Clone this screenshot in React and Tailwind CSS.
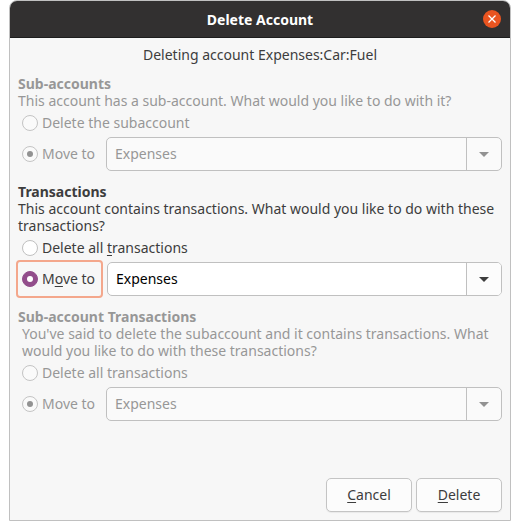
import { useState } from "react";

const radioBase =
  "grid size-4 shrink-0 appearance-none place-content-center rounded-full border border-[#c0c0c0] bg-white outline-none before:rounded-full checked:border-[#924d8b] checked:bg-[#924d8b] checked:before:size-[6px] checked:before:bg-white disabled:border-[#c4c4c4] disabled:bg-[#fafafa] disabled:checked:before:bg-[#929292]";

function Mnemonic({ text, at }) {
  if (at === undefined) return <span>{text}</span>;
  return (
    <span className="whitespace-pre">
      {text.slice(0, at)}
      <u className="underline decoration-1 underline-offset-2">{text[at]}</u>
      {text.slice(at + 1)}
    </span>
  );
}

function AccountSelect({ disabled, label }) {
  return (
    <div
      className={`relative flex h-[34px] min-w-0 grow rounded-[5px] border border-[#c0c0c0] ${
        disabled ? "bg-[#fafafa] text-[#979797]" : "bg-white text-black"
      }`}
    >
      <select
        aria-label={label}
        disabled={disabled}
        className="w-full appearance-none bg-transparent px-2 pb-0.5 opacity-100 outline-none"
      >
        <option>Expenses</option>
      </select>
      <span
        className={`pointer-events-none absolute inset-y-0 right-0 flex w-[35px] items-center justify-center rounded-r-[4px] border-l border-[#c0c0c0] ${
          disabled ? "text-[#929292]" : "bg-[#fcfcfc] text-[#3d3d3d]"
        }`}
      >
        <svg width="10" height="5" viewBox="0 0 10 5" fill="currentColor" aria-hidden="true">
          <path d="M0 0h10L5 5z" />
        </svg>
      </span>
    </div>
  );
}

function Section({ title, text, inset, name, removeLabel, removeAt, moveAt, disabled, focused }) {
  const [choice, setChoice] = useState("move");
  return (
    <fieldset disabled={disabled} className={`min-w-0 ${disabled ? "text-[#979797]" : "text-[#3d3d3d]"}`}>
      <legend className="font-bold">{title}</legend>
      <p className={inset ? "pl-1" : ""}>{text}</p>
      <label className="mt-[5px] flex items-center gap-1 pl-1">
        <input
          type="radio"
          name={name}
          className={radioBase}
          checked={choice === "delete"}
          onChange={() => setChoice("delete")}
        />
        <Mnemonic text={removeLabel} at={removeAt} />
      </label>
      <div className={`mt-1.5 flex items-center ${focused ? "gap-1.5" : "gap-1"}`}>
        <label
          className={`flex h-[34px] shrink-0 items-center gap-1 rounded-[2px] pl-1 ${
            focused ? "w-[83px] outline-2 outline-[#f4a78c]" : "w-[84px]"
          }`}
        >
          <input
            type="radio"
            name={name}
            className={radioBase}
            checked={choice === "move"}
            onChange={() => setChoice("move")}
          />
          <span className="pb-0.5">
            <Mnemonic text="Move to" at={moveAt} />
          </span>
        </label>
        <AccountSelect disabled={disabled} label={`${title}: move to account`} />
      </div>
    </fieldset>
  );
}

const dialogButton =
  "flex h-[34px] w-[86px] items-center justify-center rounded-[5px] border border-[#c4c4c4] bg-[#fcfcfc] pb-0.5 shadow-[0_1px_1px_rgba(0,0,0,0.06)]";

export default function App() {
  return (
    <main className="bg-white px-[9px] pb-[9px] font-['Noto_Sans',sans-serif] text-[14px] leading-[17px] text-[#3d3d3d]">
      <div role="dialog" aria-labelledby="dialog-title" className="rounded-t-[8px] border border-[#c0c0c0] bg-[#f7f7f7]">
        <header className="grid h-[37px] grid-cols-[1fr_auto_1fr] items-center rounded-t-[7px] border-b border-[#1d1d1d] bg-[#323030] px-[9px]">
          <h1 id="dialog-title" className="col-start-2 font-bold text-white">
            Delete Account
          </h1>
          <button
            type="button"
            aria-label="Close"
            className="flex size-[18px] items-center justify-center justify-self-end rounded-full bg-[#e95420] text-white"
          >
            <svg width="8" height="8" viewBox="0 0 8 8" stroke="currentColor" strokeWidth="1.3" aria-hidden="true">
              <path d="M0.5 0.5l7 7M7.5 0.5l-7 7" />
            </svg>
          </button>
        </header>
        <div className="p-2">
          <p className="text-center">Deleting account Expenses:Car:Fuel</p>
          <div className="mt-3 flex flex-col gap-3">
            <Section
              title="Sub-accounts"
              text="This account has a sub-account. What would you like to do with it?"
              name="subaccounts"
              removeLabel="Delete the subaccount"
              disabled
            />
            <Section
              title="Transactions"
              text="This account contains transactions. What would you like to do with these transactions?"
              name="transactions"
              removeLabel="Delete all transactions"
              removeAt={11}
              moveAt={1}
              focused
            />
            <Section
              title="Sub-account Transactions"
              text="You've said to delete the subaccount and it contains transactions. What would you like to do with these transactions?"
              inset
              name="subaccount-transactions"
              removeLabel="Delete all transactions"
              disabled
            />
          </div>
          <div className="mt-[57px] flex justify-end gap-1">
            <button type="button" className={dialogButton}>
              <Mnemonic text="Cancel" at={0} />
            </button>
            <button type="button" className={dialogButton}>
              <Mnemonic text="Delete" at={0} />
            </button>
          </div>
        </div>
      </div>
    </main>
  );
}
